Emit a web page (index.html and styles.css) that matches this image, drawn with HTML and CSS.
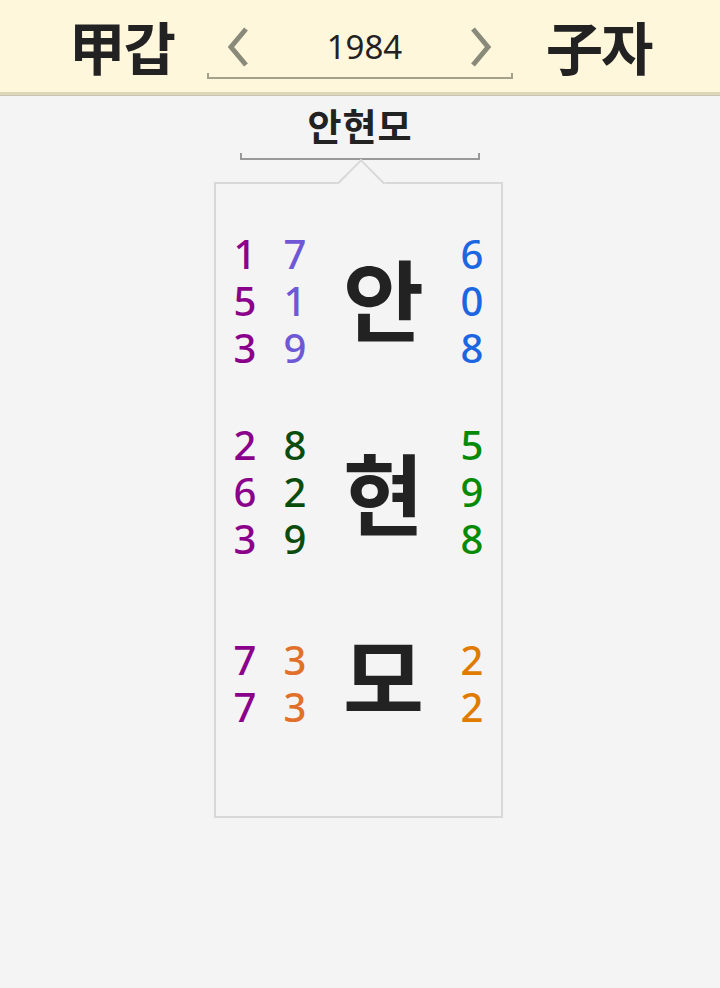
FILE: index.html
```html
<!DOCTYPE html>
<html lang="ko">
<head>
<meta charset="utf-8">
<link rel="stylesheet" href="styles.css">
</head>
<body>
<header class="top">
  <div class="hanja">甲갑</div>
  <div class="yearnav">
    <div class="yearrow">
      <svg class="chev" viewBox="0 0 24 42" width="24" height="42"><polyline points="20,3 5,21 20,39" fill="none" stroke="#8a8a7a" stroke-width="5"/></svg>
      <span class="year">1984</span>
      <svg class="chev" viewBox="0 0 24 42" width="24" height="42"><polyline points="4,3 19,21 4,39" fill="none" stroke="#8a8a7a" stroke-width="5"/></svg>
    </div>
    <div class="yearbracket"></div>
  </div>
  <div class="hanja">子자</div>
</header>
<main class="content">
  <div class="name">안현모</div>
  <div class="namebracket"></div>
  <section class="card">
    <div class="block b1">
      <div class="col c1"><span>1</span><span>5</span><span>3</span></div>
      <div class="col c2 slate"><span>7</span><span>1</span><span>9</span></div>
      <div class="big">안</div>
      <div class="col c3 blue"><span>6</span><span>0</span><span>8</span></div>
    </div>
    <div class="block b2">
      <div class="col c1"><span>2</span><span>6</span><span>3</span></div>
      <div class="col c2 dkgreen"><span>8</span><span>2</span><span>9</span></div>
      <div class="big">현</div>
      <div class="col c3 green"><span>5</span><span>9</span><span>8</span></div>
    </div>
    <div class="block b3">
      <div class="col c1"><span>7</span><span>7</span></div>
      <div class="col c2 orange"><span>3</span><span>3</span></div>
      <div class="big">모</div>
      <div class="col c3 amber"><span>2</span><span>2</span></div>
    </div>
  </section>
</main>
</body>
</html>
```
FILE: styles.css
```css
* { box-sizing: border-box; }
html, body { margin: 0; padding: 0; }
body {
  background: #f4f4f4;
  font-family: "Noto Sans CJK KR", "Noto Sans", sans-serif;
  color: #222;
  width: 720px;
  height: 988px;
  overflow: hidden;
}
.top {
  height: 95px;
  background: #fef7dc;
  border-bottom: 3px solid #ddd6b8;
  box-shadow: 0 1px 0 #c9c5b5;
  display: flex;
  justify-content: center;
  align-items: center;
  gap: 33px;
  padding-bottom: 3px;
}
.hanja {
  font-size: 57px;
  font-weight: 700;
  line-height: 62px;
  letter-spacing: -2px;
}
.yearnav {
  width: 306px;
  display: flex;
  flex-direction: column;
  margin-top: 4px;
}
.yearrow {
  height: 58px;
  padding: 6px 20px 0 19px;
  display: flex;
  align-items: center;
  justify-content: space-between;
}
.year {
  font-family: "Noto Sans", sans-serif;
  font-size: 33px;
  line-height: 40px;
  color: #222;
  margin-left: 10px;
}
.yearbracket {
  height: 6px;
  border: 2px solid #a3a08c;
  border-top: none;
}
.content {
  display: flex;
  flex-direction: column;
  align-items: center;
}
.name {
  margin-top: 8px;
  font-size: 37px;
  font-weight: 700;
  line-height: 44px;
  letter-spacing: 1px;
}
.namebracket {
  width: 240px;
  height: 7px;
  margin-top: 6px;
  border: 2px solid #999;
  border-top: none;
}
.card {
  position: relative;
  margin-top: 22px;
  margin-right: 3px;
  width: 289px;
  height: 636px;
  border: 2px solid #d8d8d8;
  padding: 46px 16px 0 16px;
}
.card::before {
  content: "";
  position: absolute;
  left: 128px;
  top: -18px;
  width: 32px;
  height: 32px;
  background: #f4f4f4;
  border-top: 2px solid #d8d8d8;
  border-left: 2px solid #d8d8d8;
  transform: rotate(45deg);
}
.block {
  display: grid;
  grid-template-columns: 26px 26px 1fr 26px;
  column-gap: 24px;
  align-items: center;
}
.b1 { margin-bottom: 50px; }
.b2 { margin-bottom: 74px; }
.col {
  display: flex;
  flex-direction: column;
  align-items: center;
  font-family: "Noto Sans", sans-serif;
  font-size: 40px;
  font-weight: 500;
  line-height: 47px;
}
.c1 { color: #8b008b; }
.slate { color: #6e58d6; }
.blue { color: #1d66e2; }
.dkgreen { color: #0b4b0b; }
.green { color: #058a05; }
.orange { color: #e0702a; }
.amber { color: #e07b00; }
.big {
  text-align: center;
  font-size: 88px;
  font-weight: 700;
  line-height: 100px;
  color: #222;
}
.b1 .big { margin-top: -10px; }
.b2 .big { margin-top: -4px; }
.b3 .big { margin-top: -18px; }
```
